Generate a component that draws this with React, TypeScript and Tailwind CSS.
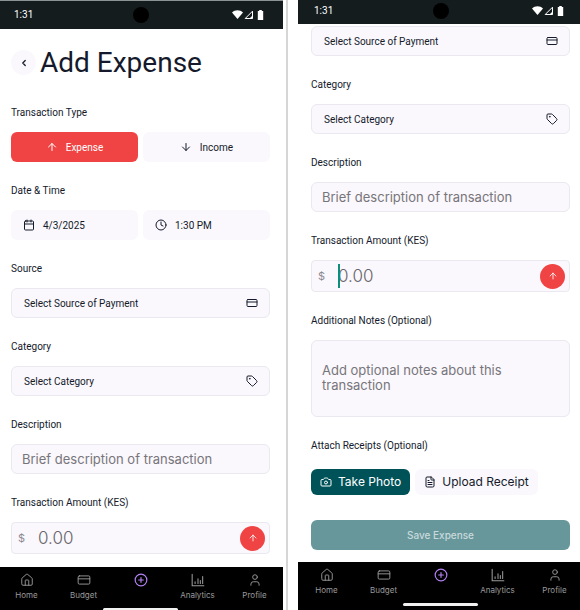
import React, { useId } from "react";
import type { ReactNode } from "react";
import {
  ArrowDown,
  ArrowUp,
  Calendar,
  Camera,
  ChevronLeft,
  CirclePlus,
  Clock,
  CreditCard,
  FileText,
  House,
  Tag,
  User,
} from "lucide-react";

const fieldBox = "rounded-md border border-[#ebe9f0] bg-[#faf8fc]";

function StatusBar({ className }: { className: string }) {
  return (
    <div className={`relative flex shrink-0 items-center justify-between bg-[#141c1d] pr-[19px] pl-4 text-white ${className}`}>
      <span className="text-[10px] leading-4">1:31</span>
      <span className="absolute left-1/2 size-4 -translate-x-1/2 rounded-full bg-black" />
      <svg className="h-2.5 w-8" viewBox="0 0 32 10" fill="currentColor" aria-hidden="true">
        <path d="M0 2.4C3 -0.4 8 -0.4 11 2.4L5.5 9z" />
        <path d="M20.5 1.2V8.5H13.2z" fill="none" stroke="currentColor" strokeWidth="1" />
        <path d="M20.5 5.5V8.5H17.5z" />
        <path d="M27.2 0h2.6v1h1.4v9h-5.4V1h1.4z" />
      </svg>
    </div>
  );
}

function ChartIcon() {
  return (
    <svg className="size-3.5" viewBox="0 0 24 24" fill="none" stroke="currentColor" strokeWidth="1.8" strokeLinecap="round" aria-hidden="true">
      <path d="M2 2v20h20M7 18v-3M12 18v-8M16 18v-5M20 18V6" />
    </svg>
  );
}

function NavItem({ icon, label, active = false }: { icon: ReactNode; label: string; active?: boolean }) {
  return (
    <a
      href="#"
      aria-label={label}
      className={`flex flex-1 flex-col items-center gap-0.5 ${active ? "text-[#b583f5]" : "text-[#9a9a9a]"}`}
    >
      {icon}
      {!active && <span className="font-[Inter,sans-serif] text-[8px] leading-3">{label}</span>}
    </a>
  );
}

function BottomNav() {
  return (
    <nav className="flex h-12 shrink-0 flex-col bg-black pt-1.5">
      <div className="flex h-[35px] shrink-0">
        <NavItem icon={<House className="size-3.5" strokeWidth={1.6} />} label="Home" />
        <NavItem icon={<CreditCard className="size-3.5" strokeWidth={1.6} />} label="Budget" />
        <NavItem icon={<CirclePlus className="size-3.5" strokeWidth={2} />} label="Add" active />
        <NavItem icon={<ChartIcon />} label="Analytics" />
        <NavItem icon={<User className="size-3.5" strokeWidth={1.6} />} label="Profile" />
      </div>
      <span className="h-[3px] w-[75px] shrink-0 self-center rounded-full bg-[#f1f1f1]" />
    </nav>
  );
}

function Field({ label, children }: { label: string; children: (id: string) => ReactNode }) {
  const id = useId();
  return (
    <div className="flex flex-col gap-[11px]">
      <label htmlFor={id} className="text-[10px] leading-4">
        {label}
      </label>
      {children(id)}
    </div>
  );
}

function Group({ label, children }: { label: string; children: ReactNode }) {
  const id = useId();
  return (
    <div role="group" aria-labelledby={id} className="flex flex-col gap-[11px]">
      <span id={id} className="text-[10px] leading-4">
        {label}
      </span>
      {children}
    </div>
  );
}

function SelectBox({ id, name, text, icon }: { id?: string; name?: string; text: string; icon: ReactNode }) {
  return (
    <div className="relative">
      <select id={id} aria-label={name} className={`h-[30px] w-full appearance-none px-3 text-[10px] ${fieldBox}`}>
        <option>{text}</option>
      </select>
      <span className="pointer-events-none absolute inset-y-0 right-3 flex items-center">{icon}</span>
    </div>
  );
}

function CategoryField() {
  return (
    <Field label="Category">
      {(id) => <SelectBox id={id} text="Select Category" icon={<Tag className="size-3" />} />}
    </Field>
  );
}

function DescriptionField() {
  return (
    <Field label="Description">
      {(id) => (
        <input
          id={id}
          type="text"
          placeholder="Brief description of transaction"
          className={`h-[30px] w-full px-2.5 font-[Inter,sans-serif] text-[13px] placeholder:text-[#77757b] ${fieldBox}`}
        />
      )}
    </Field>
  );
}

function AmountField({ focused = false }: { focused?: boolean }) {
  return (
    <Field label="Transaction Amount (KES)">
      {(id) => (
        <div className="flex h-8 items-center rounded-sm border border-[#ebe9f0] bg-[#faf8fc] pr-1 pl-1.5">
          <span className="w-5 font-[Inter,sans-serif] text-[11px] text-[#8b8990]">$</span>
          <div className="relative flex min-w-0 flex-1">
            <input
              id={id}
              type="text"
              inputMode="decimal"
              placeholder="0.00"
              className="w-full min-w-0 bg-transparent font-[Inter,sans-serif] text-[17px] leading-6 font-light placeholder:text-[#66646a]"
            />
            {focused && <span className="absolute inset-y-0 left-0 w-0.5 bg-[#0b8f7c]" />}
          </div>
          <button type="button" aria-label="Expense" className="flex size-[25px] items-center justify-center rounded-full bg-[#f04444] text-white">
            <ArrowUp className="size-2.5" />
          </button>
        </div>
      )}
    </Field>
  );
}

function EntryScreen() {
  return (
    <section className="-ml-0.5 flex min-w-0 flex-1 flex-col border-t border-[#8d9293]">
      <StatusBar className="h-7" />
      <main className="flex flex-col gap-[21px] px-[13px] pb-[13px]">
        <header className="flex h-[55px] items-center gap-1 pt-3">
          <button type="button" aria-label="Back" className="flex size-[25px] items-center justify-center rounded-full bg-[#faf8fc]">
            <ChevronLeft className="size-2.5" strokeWidth={3} />
          </button>
          <h1 className="text-[28px] leading-10">Add Expense</h1>
        </header>
        <Group label="Transaction Type">
          <div className="grid grid-cols-2 gap-[5px] text-[10px]">
            <button type="button" className="flex h-[30px] items-center justify-center gap-2 rounded-md bg-[#f04444] text-white">
              <ArrowUp className="size-3" />
              Expense
            </button>
            <button type="button" className="flex h-[30px] items-center justify-center gap-2 rounded-md bg-[#faf8fc]">
              <ArrowDown className="size-3" />
              Income
            </button>
          </div>
        </Group>
        <Group label="Date &amp; Time">
          <div className="grid grid-cols-2 gap-[5px] text-[10px]">
            <button type="button" className="flex h-[30px] items-center gap-2 rounded-md bg-[#faf8fc] px-3">
              <Calendar className="size-3" />
              4/3/2025
            </button>
            <button type="button" className="flex h-[30px] items-center gap-2 rounded-md bg-[#faf8fc] px-3">
              <Clock className="size-3" />
              1:30 PM
            </button>
          </div>
        </Group>
        <Field label="Source">
          {(id) => <SelectBox id={id} text="Select Source of Payment" icon={<CreditCard className="size-3" />} />}
        </Field>
        <CategoryField />
        <DescriptionField />
        <AmountField />
      </main>
      <BottomNav />
    </section>
  );
}

function DetailsScreen() {
  return (
    <section className="-mr-[3px] flex min-w-0 flex-1 flex-col">
      <StatusBar className="h-6 pb-0.5" />
      <main className="flex flex-col gap-[21px] px-[13px] pt-0.5 pb-3">
        <SelectBox name="Source" text="Select Source of Payment" icon={<CreditCard className="size-3" />} />
        <CategoryField />
        <DescriptionField />
        <AmountField focused />
        <Field label="Additional Notes (Optional)">
          {(id) => (
            <textarea
              id={id}
              placeholder="Add optional notes about this transaction"
              className={`block h-[77px] w-full resize-none px-2.5 pt-[22px] font-[Inter,sans-serif] text-[13px] leading-[15px] placeholder:text-[#77757b] ${fieldBox}`}
            />
          )}
        </Field>
        <Group label="Attach Receipts (Optional)">
          <div className="flex gap-[5px] py-1 font-[Inter,sans-serif] text-[12px]">
            <button type="button" className="flex h-[26px] items-center gap-1.5 rounded-md bg-[#005259] px-[9px] text-white">
              <Camera className="size-3" />
              Take Photo
            </button>
            <button type="button" className="flex h-[26px] items-center gap-1.5 rounded-md bg-[#faf8fc] px-[9px]">
              <FileText className="size-3" />
              Upload Receipt
            </button>
          </div>
        </Group>
        <button type="button" className="h-[30px] rounded-md bg-[#67979b] font-[Inter,sans-serif] text-[10px] font-medium text-[#c8dadc]">
          Save Expense
        </button>
      </main>
      <BottomNav />
    </section>
  );
}

export default function App() {
  return (
    <div className="flex h-screen overflow-hidden bg-white font-[Roboto,sans-serif] text-[#141a2b]">
      <EntryScreen />
      <div className="mr-2.5 ml-[3px] w-0.5 shrink-0 bg-[#d6d6d6]" />
      <DetailsScreen />
    </div>
  );
}
